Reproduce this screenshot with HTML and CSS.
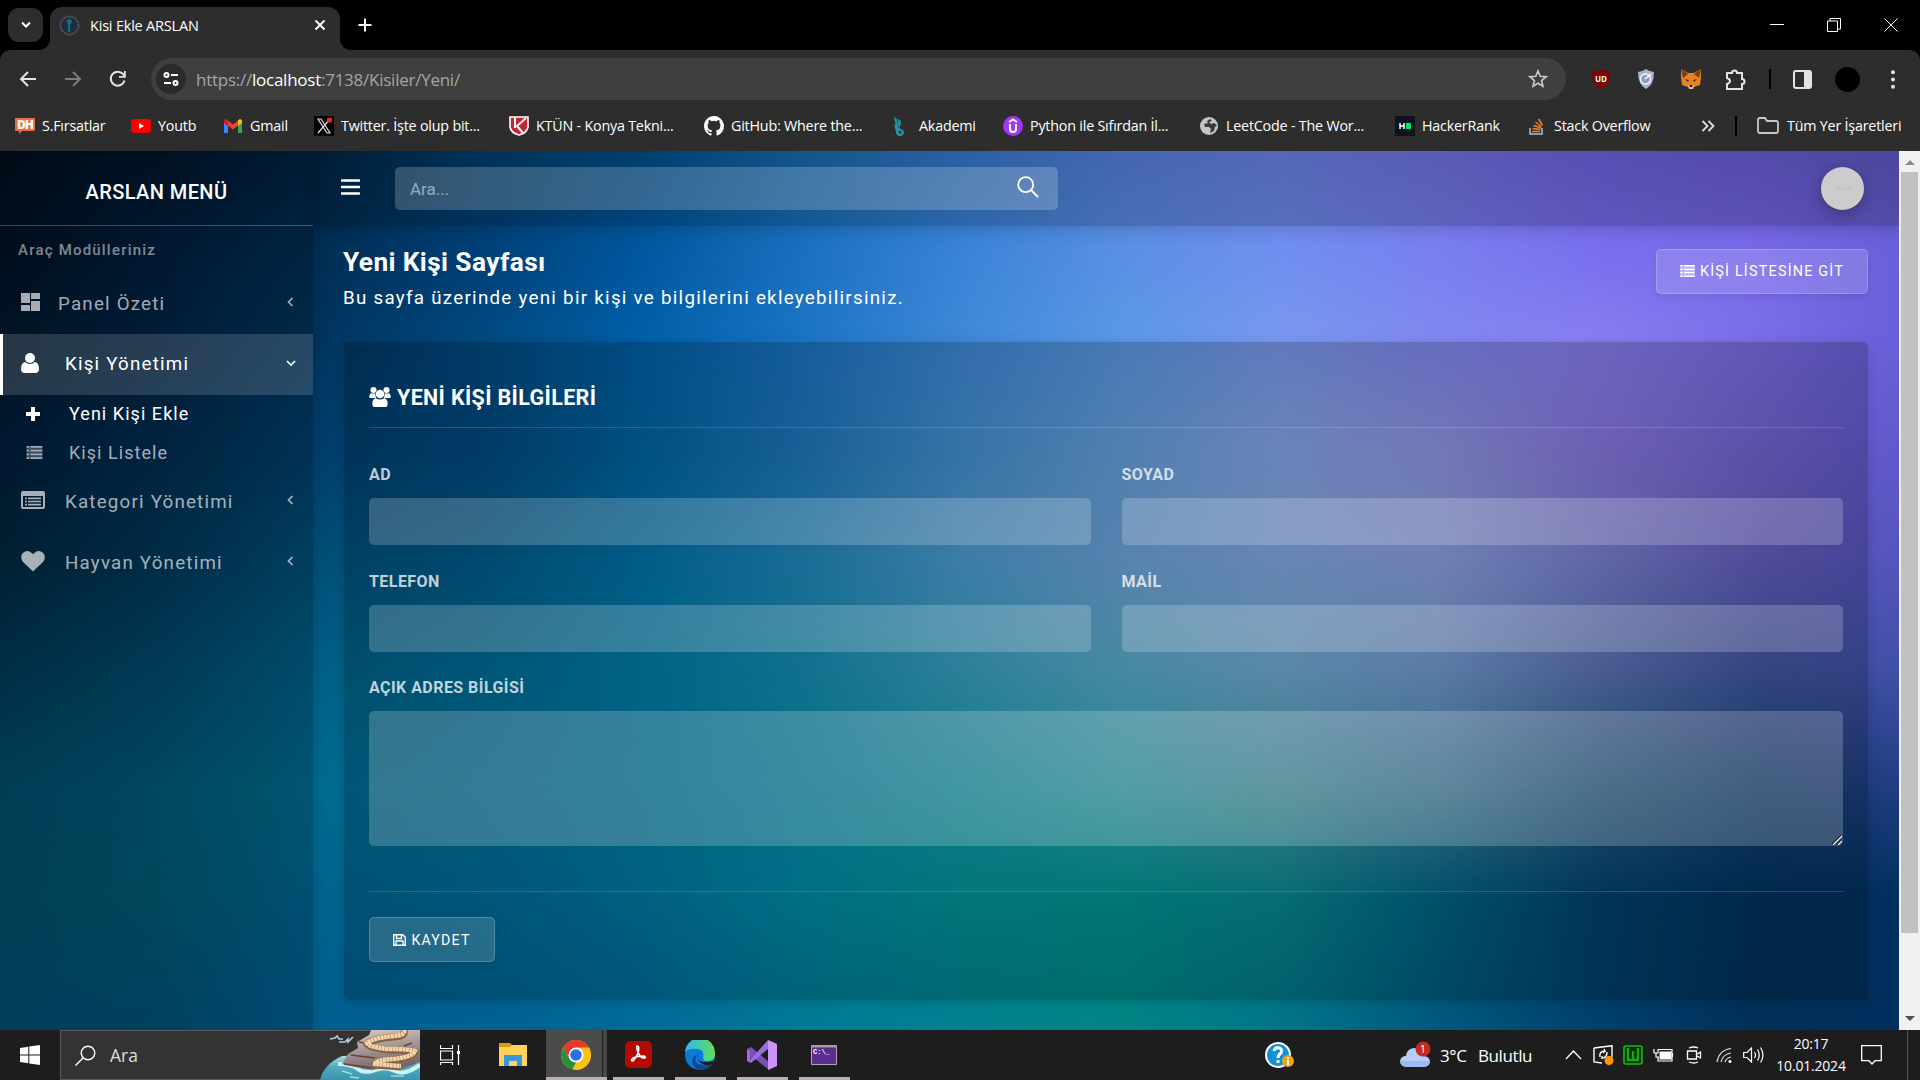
FILE: index.html
```html
<!DOCTYPE html>
<html lang="tr">
<head>
<meta charset="utf-8">
<title>Kisi Ekle ARSLAN</title>
<link rel="stylesheet" href="styles.css">
</head>
<body>
<svg class="defs" width="0" height="0">
  <symbol id="list" viewBox="0 0 17 14"><path d="M0 0h3v2H0zM4 0h13v2H4zM0 4h3v2H0zM4 4h13v2H4zM0 8h3v2H0zM4 8h13v2H4zM0 12h3v2H0zM4 12h13v2H4z" fill="currentColor"/><path d="M0 2h17v2H0zM0 6h17v2H0zM0 10h17v2H0z" fill="currentColor" opacity=".35"/></symbol>
  <symbol id="left" viewBox="0 0 8 12"><path d="M6.5 2 2.5 6l4 4" fill="none" stroke="currentColor" stroke-width="1.7"/></symbol>
</svg>

<header class="tabs">
  <button class="tabsearch"><svg width="12" height="8" viewBox="0 0 12 8"><path d="m2 1.5 4 4 4-4" fill="none" stroke="#fff" stroke-width="2"/></svg></button>
  <div class="tab">
    <svg width="21" height="21" viewBox="0 0 21 21"><circle cx="10.500" cy="10.500" r="9" fill="none" stroke="#50506a" stroke-width="2" stroke-dasharray="2 1"/><circle cx="10.500" cy="10.500" r="7" fill="#19303e"/><path d="M8 5q5-2 5 2l-2 3v7H9v-7z" fill="#1888a8" opacity=".7"/></svg>
    <span class="ui">Kisi Ekle ARSLAN</span>
    <svg class="x" width="12" height="12" viewBox="0 0 12 12"><path d="m1.500 1.500 9 9m0-9-9 9" stroke="#fff" stroke-width="1.800"/></svg>
  </div>
  <svg class="plus" width="14" height="14" viewBox="0 0 14 14"><path d="M7 .5v13M.5 7h13" stroke="#fff" stroke-width="2"/></svg>
  <div class="win">
    <svg width="14" height="14" viewBox="0 0 14 14"><path d="M0 6.500h14" stroke="#fff"/></svg>
    <svg width="14" height="14" viewBox="0 0 14 14"><path d="M.5 3h10v10.500H.5zM3 3V.5h10.500V11h-3" fill="none" stroke="#fff"/></svg>
    <svg width="14" height="14" viewBox="0 0 14 14"><path d="m.5.5 13 13m0-13-13 13" stroke="#fff"/></svg>
  </div>
</header>

<nav class="toolbar">
  <div class="navbtns">
    <svg width="18" height="18" viewBox="0 0 18 18"><path d="M17 9H2.500M9 2 2 9l7 7" fill="none" stroke="#e3e3e3" stroke-width="2"/></svg>
    <svg width="18" height="18" viewBox="0 0 18 18"><path d="M1 9h14.500M9 2l7 7-7 7" fill="none" stroke="#7c7c7c" stroke-width="2"/></svg>
    <svg width="18" height="18" viewBox="0 0 18 18"><path d="M15.500 10.500A7 7 0 1 1 14 4l2 2.500" fill="none" stroke="#e3e3e3" stroke-width="2"/><path d="M16.800 1v6.800H10V6h5V1z" fill="#e3e3e3"/></svg>
  </div>
  <div class="omni">
    <span class="site"><svg width="16" height="14" viewBox="0 0 16 14"><g fill="none" stroke="#fff" stroke-width="2"><circle cx="3.500" cy="3" r="2"/><path d="M8 3h7M1 11h7"/><circle cx="12.500" cy="11" r="2"/></g></svg></span>
    <span class="url">https://<b>localhost</b>:7138/Kisiler/Yeni/</span>
    <svg class="star" width="20" height="20" viewBox="0 0 20 20"><path d="m10 2 2.200 5.300 5.800.5-4.400 3.800 1.300 5.700L10 14.300l-4.900 3 1.300-5.700L2 7.800l5.800-.5z" fill="none" stroke="#c7c7c7" stroke-width="1.700"/></svg>
  </div>
  <div class="ext">
    <svg width="20" height="20" viewBox="0 0 20 20"><path d="M10 0q4 3 9 3 1 13-9 17Q0 16 1 3q5 0 9-3z" fill="#800000"/><text x="10" y="12.500" class="tiny">UD</text></svg>
    <svg width="20" height="20" viewBox="0 0 20 20"><path d="M10 0q4 3 8 3 0 13-8 17Q2 16 2 3q4 0 8-3z" fill="#aab4ca"/><circle cx="9.500" cy="10" r="5" fill="#8f9bb8" stroke="#f4f7fc" stroke-width="1.400"/><path d="m9 10 6-5" stroke="#fff" stroke-width="1.500"/></svg>
    <svg width="22" height="20" viewBox="0 0 22 20"><path d="m1 0 7 4h6l7-4v8l-1 8-6 2-3 2-3-2-6-2-1-8z" fill="#e8821e"/><path d="m1 0 7 5-5 4zM21 0l-7 5 5 4z" fill="#763d16"/><path d="m5 10 4 1-1 2zM17 10l-4 1 1 2z" fill="#233447"/><path d="M8 16h6l-1 4H9z" fill="#d7c1b3"/><path d="M9.500 16h3l-.5 2h-2z" fill="#161616"/></svg>
    <svg width="22" height="23" viewBox="0 0 22 23"><path d="M2 5h5a2.500 2.500 0 0 1 5 0h5v6a2.400 2.400 0 0 1 0 5v5H2v-5q3-1 3-3t-3-3z" fill="none" stroke="#e3e3e3" stroke-width="2"/></svg>
    <i class="bar"></i>
    <svg width="19" height="19" viewBox="0 0 19 19"><rect x="1" y="1" width="17" height="17" rx="2" fill="none" stroke="#e3e3e3" stroke-width="2"/><path d="M11 1h7v17h-7z" fill="#e3e3e3"/></svg>
    <i class="me"></i>
    <svg width="4" height="19" viewBox="0 0 4 19"><g fill="#e3e3e3"><circle cx="2" cy="2.300" r="2"/><circle cx="2" cy="9.500" r="2"/><circle cx="2" cy="16.700" r="2"/></g></svg>
  </div>
</nav>

<nav class="marks ui">
  <a><svg width="20" height="20" viewBox="0 0 20 20"><path d="M0 2h20v12l-1 1H7l-3 3v-3H0z" fill="#ee6a40"/><text x="10" y="12.500" class="dh">DH</text></svg>S.Fırsatlar</a>
  <a><svg width="20" height="20" viewBox="0 0 20 20"><rect y="3" width="20" height="14" rx="4" fill="#f00"/><path d="m8 7 5 3-5 3z" fill="#fff"/></svg>Youtb</a>
  <a><svg width="20" height="20" viewBox="0 0 20 20"><path d="M1 4h4v13H1z" fill="#4285f4"/><path d="M15 4h4v13h-4z" fill="#34a853"/><path d="m3 3 7 5.500L17 3v5l-7 5.500L3 8z" fill="#ea4335"/><path d="M15 4.500 17 3l2 1v3l-4 3z" fill="#fbbc04"/><path d="M1 4 3 3l2 1.500V10L1 7z" fill="#c5221f"/></svg>Gmail</a>
  <a><svg width="20" height="20" viewBox="0 0 20 20"><path d="M0 0h20v20H0z"/><path d="M4 3h3l9 14h-3zM16 3 4 17" fill="none" stroke="#ddd" stroke-width="1.200"/><circle cx="15.500" cy="4" r="2.600" fill="#f22"/></svg>Twitter. İşte olup bit...</a>
  <a><svg width="20" height="20" viewBox="0 0 20 20"><path d="M1 1h18v10q-1 6-9 8-8-2-9-8z" fill="#c82333" stroke="#fff" stroke-width="1.600"/><path d="M6 2v10m11-10-9 8 6 7" fill="none" stroke="#fff" stroke-width="2"/></svg>KTÜN - Konya Tekni...</a>
  <a><svg width="20" height="20" viewBox="0 0 16 16"><path fill="#fff" d="M8 0C3.580 0 0 3.580 0 8c0 3.540 2.290 6.530 5.470 7.590.4.070.55-.17.55-.38v-1.490c-2.010.37-2.530-.49-2.690-.94-.09-.23-.48-.94-.82-1.130-.28-.15-.68-.52-.01-.53.630-.01 1.080.58 1.230.82.720 1.210 1.870.87 2.330.66.070-.52.280-.87.510-1.070-1.780-.2-3.640-.89-3.640-3.950 0-.87.310-1.590.82-2.150-.08-.2-.36-1.020.08-2.120 0 0 .67-.21 2.200.82a7.500 7.500 0 0 1 4 0c1.530-1.040 2.200-.82 2.200-.82.440 1.100.160 1.920.08 2.120.51.560.82 1.270.82 2.150 0 3.070-1.870 3.750-3.650 3.950.29.250.54.730.54 1.480v2.200c0 .21.150.46.550.38A8.010 8.010 0 0 0 8 0z"/></svg>GitHub: Where the...</a>
  <a class="ak"><svg width="20" height="20" viewBox="0 0 20 20"><path d="m4 1 3 2 1 8-2-1zm4 2 3 2-1 6-2-1zM4 8l7 5q3 1 3 4-1 3-4 3-4 0-4-4z" fill="#2793aa"/><circle cx="10" cy="16" r="1.500" fill="#2d2d2d"/></svg>Akademi</a>
  <a><svg width="20" height="20" viewBox="0 0 20 20"><circle cx="10" cy="10" r="10" fill="#a435f0"/><path d="m6 6 4-2.500L14 6M7 8v5q0 3 3 3t3-3V8" fill="none" stroke="#fff" stroke-width="2"/></svg>Python ile Sıfırdan İl...</a>
  <a><svg width="20" height="20" viewBox="0 0 20 20"><circle cx="10" cy="10" r="9" fill="#c4c7c9"/><path d="M11 3 8 5l1 2-4 1 1 3 4 0 2 2-1 4 4-2 1-4 2-2-3-2-3 1-2-2 3-1z" fill="#3a3a3a"/></svg>LeetCode - The Wor...</a>
  <a><svg width="20" height="20" viewBox="0 0 20 20"><path d="M0 0h20v20H0z" fill="#0b141f"/><path d="M5 7v6m4-6v6M5 10h4" stroke="#fff" stroke-width="1.500"/><path d="M11 7h5v6h-5z" fill="#00ea64"/></svg>HackerRank</a>
  <a><svg width="20" height="20" viewBox="0 0 20 20"><path d="M3 12v6h12v-6" fill="none" stroke="#bcbbbb" stroke-width="1.500"/><path d="M5 15.500h8M5.500 12.500l8 1M6.500 9.500l7.500 2.300M8.500 6l6 4.500M11.500 3l4 6" stroke="#f48024" stroke-width="1.500"/></svg>Stack Overflow</a>
  <a class="more"><svg width="14" height="12" viewBox="0 0 14 12"><path d="m1.500 1 5 5-5 5m6-10 5 5-5 5" fill="none" stroke="#ddd" stroke-width="1.800"/></svg></a>
  <a class="all"><svg width="22" height="18" viewBox="0 0 22 18"><path d="M1 3q0-2 2-2h5l2 3h9q2 0 2 2v8q0 2-2 2H3q-2 0-2-2z" fill="none" stroke="#c7c7c7" stroke-width="1.800"/></svg>Tüm Yer İşaretleri</a>
</nav>

<main class="view">
  <div class="page">
    <div class="mesh"><i class="m1"></i><i class="m2"></i><i class="m3"></i><i class="m4"></i><i class="m5"></i><i class="m6"></i><i class="m7"></i><i class="m8"></i><i class="m9"></i></div>
    <aside class="side">
      <h5>ARSLAN MENÜ</h5>
      <p class="cap"><span>Araç Modülleriniz</span></p>
      <a class="row dash"><svg width="19" height="18" viewBox="0 0 19 18"><path d="M0 0h9v10H0zM10 0h9v6h-9zM0 12h9v6H0zM10 8h9v10h-9z" fill="currentColor"/></svg><span>Panel Özeti</span><svg class="ch" width="8" height="12"><use href="#left"/></svg></a>
      <a class="row on"><svg width="18" height="20" viewBox="0 0 18 20"><circle cx="9" cy="5" r="5" fill="currentColor"/><path d="M4 9q5 4 10 0 4 1 4 7 0 4-4 4H4q-4 0-4-4 0-6 4-7z" fill="currentColor"/></svg><span>Kişi Yönetimi</span><svg class="ch" width="12" height="8" viewBox="0 0 12 8"><path d="m2 2 4 4 4-4" fill="none" stroke="currentColor" stroke-width="1.700"/></svg></a>
      <div class="sub">
        <a class="cur"><svg width="14" height="14" viewBox="0 0 14 14"><path d="M5 0h4v5h5v4H9v5H5V9H0V5h5z" fill="currentColor"/></svg><span>Yeni Kişi Ekle</span></a>
        <a><svg width="17" height="13"><use href="#list" width="17" height="13"/></svg><span>Kişi Listele</span></a>
      </div>
      <a class="row"><svg width="24" height="18" viewBox="0 0 24 18"><path d="M2 0h20q2 0 2 2v14q0 2-2 2H2q-2 0-2-2V2q0-2 2-2zm0 5v11h20V5z" fill="currentColor" fill-rule="evenodd"/><path d="M4 7.300h2m1 0h13M4 10.500h2m1 0h13M4 13.700h2m1 0h13" stroke="currentColor" stroke-width="1.700"/></svg><span>Kategori Yönetimi</span><svg class="ch" width="8" height="12"><use href="#left"/></svg></a>
      <a class="row"><svg width="24" height="21" viewBox="0 0 24 21"><path d="M12 20.500 2 11Q-1 7 1 3 5-2 10 1.500L12 3l2-1.500Q19-2 23 3q2 4-1 8z" fill="currentColor"/></svg><span>Hayvan Yönetimi</span><svg class="ch" width="8" height="12"><use href="#left"/></svg></a>
    </aside>
    <section class="main">
      <div class="top">
        <svg width="19" height="16" viewBox="0 0 19 16"><path d="M1 1.500h17M1 8h17M1 14.500h17" stroke="#fff" stroke-width="2.600" stroke-linecap="round"/></svg>
        <div class="search"><span>Ara...</span><svg width="22" height="22" viewBox="0 0 22 22"><circle cx="8.700" cy="8.700" r="7.500" fill="none" stroke="#fff" stroke-width="1.800"/><path d="m14 14 7 7" stroke="#fff" stroke-width="2"/></svg></div>
        <div class="avatar">110 x 110</div>
      </div>
      <div class="head">
        <div><h1>Yeni Kişi Sayfası</h1><p>Bu sayfa üzerinde yeni bir kişi ve bilgilerini ekleyebilirsiniz.</p></div>
        <a class="btn goto"><svg width="15" height="12"><use href="#list" width="15" height="12"/></svg><span>KİŞİ LİSTESİNE GİT</span></a>
      </div>
      <form class="card">
        <h2><svg width="22" height="20" viewBox="0 0 22 20"><g fill="#fff"><circle cx="4.500" cy="3" r="3"/><circle cx="17.500" cy="3" r="3"/><path d="M2 6q3 1 4 0l1 5H1Q-1 9 2 6zM20 6q-3 1-4 0l-1 5h6q2-2-1-5z"/><circle cx="11" cy="7" r="4.300"/><path d="M6.500 11q4.500 3 9 0 4 2 3 7 0 2-2 2h-11q-2 0-2-2-1-5 3-7z"/></g></svg><span>YENİ KİŞİ BİLGİLERİ</span></h2>
        <div class="grid">
          <label><span>AD</span><i class="in"></i></label>
          <label><span>SOYAD</span><i class="in"></i></label>
          <label><span>TELEFON</span><i class="in"></i></label>
          <label><span>MAİL</span><i class="in"></i></label>
          <label class="wide"><span>AÇIK ADRES BİLGİSİ</span><i class="in area"><svg width="10" height="10" viewBox="0 0 10 10"><path d="m0 10 10-10M5 10l5-5" stroke="#222" stroke-width="2.200"/><path d="m1 10 9-9M6 10l4-4" stroke="#fff" stroke-width="1.100"/></svg></i></label>
        </div>
        <div class="foot"><a class="btn save"><svg width="13" height="12" viewBox="0 0 13 12"><path d="M.7.7h9l2.600 2.500v8.100H.7zM3.500 1v3.500h5V1M3 11V7h7v4" fill="none" stroke="#fff" stroke-width="1.400"/></svg><span>KAYDET</span></a></div>
      </form>
    </section>
  </div>
  <div class="scroll"><i class="up"></i><i class="thumb"></i><i class="down"></i></div>
</main>

<footer class="task">
  <div class="start"><svg width="20" height="20" viewBox="0 0 20 20"><path d="m0 3 8.300-1.200v7.700H0zM9.300 1.600 20 0v9.500H9.300zM0 10.500h8.300v7.700L0 17zM9.300 10.500H20V20L9.300 18.400z" fill="#fff"/></svg></div>
  <div class="find"><svg width="21" height="21" viewBox="0 0 21 21"><circle cx="13" cy="8" r="6.800" fill="none" stroke="#fff" stroke-width="1.400"/><path d="m8 13-7.500 7.500" stroke="#fff" stroke-width="1.500"/></svg><span>Ara</span>
    <svg class="isle" width="100" height="50" viewBox="0 0 100 50"><defs><linearGradient id="sea" x1="0" y1="0" x2="0" y2="1"><stop offset="0" stop-color="#bfe9ec"/><stop offset=".5" stop-color="#52acc0"/><stop offset="1" stop-color="#3a94ae"/></linearGradient><linearGradient id="rock" x1="0" y1="0" x2=".3" y2="1"><stop offset="0" stop-color="#dccdc9"/><stop offset="1" stop-color="#77676c"/></linearGradient></defs><path d="M0 50q4-16 22-24l78-3v27z" fill="url(#sea)"/><path d="M18 34q14 0 20 5t17 1 20 1 25-6" fill="none" stroke="#c8f6f5" stroke-width="4"/><path d="m51 0-2 5-12 7 1 6-10 6-6 10 13 3 17 3 12-2 18 1 18-7V0z" fill="url(#rock)"/><path d="m39 12 10 2m-18 11 24 3m-31 6 28 4m40-25-8 3m9 5-18 9" stroke="#6b4034" stroke-width="1.500"/><path d="M84 0q2 7-10 7-22 2-27 7 2 4 20 6 24 0 28 2-2 6-22 8-18 1-18 5l26 2" fill="none" stroke="#876144" stroke-width="7"/><path d="M84 0q2 5-10 6-22 2-27 7 2 4 20 6 24 0 28 2-2 6-22 8-18 1-18 5l26 2" fill="none" stroke="#f5d7ad" stroke-width="4.500" stroke-dasharray="3 .4"/><path d="m10 9 5-1 2-2 2 3 4 0M19 12l6 0 3-3 0 3 5-5" fill="none" stroke="#b8cbe0" stroke-width="1.600"/><path d="m22 41 10 3m-2 3 9 1m32-2 13 0" stroke="#8be0e2" stroke-width="1.600"/></svg>
  </div>
  <div class="apps">
    <span class="tv"><svg width="20" height="20" viewBox="0 0 20 20"><path d="M.5 0v3.500h12V0M.5 6h12v9H.5zM.5 20v-2.500h12V20M18.500 0v6m0 3v11" fill="none" stroke="#fff" stroke-width="1.200"/><path d="M17 6h3v3h-3z" fill="#fff"/></svg></span>
    <span><svg width="28" height="24" viewBox="0 0 28 24"><path d="M0 0h11l2 2v6H0z" fill="#dd9b0b"/><path d="M0 4h11l2-2h15v21H0z" fill="#ffd35a"/><path d="M5 23V12h18v11h-5v-5h-8v5z" fill="#3a96dd"/></svg></span>
    <span class="act"><svg width="30" height="30" viewBox="0 0 30 30"><circle cx="15" cy="15" r="15" fill="#fbc116"/><path d="M2 7.500A15 15 0 0 1 28 7.500H15L8.500 19z" fill="#e33b2e"/><path d="M2 7.500 8.500 19l6.500 3.500L11.200 29.500A15 15 0 0 1 2 7.500z" fill="#229342"/><path d="m15 30 6.500-11L22 8h6.200A15 15 0 0 1 15 30z" fill="#fbc116"/><circle cx="15" cy="15" r="7.500" fill="#fff"/><circle cx="15" cy="15" r="5.800" fill="#2c6fe8"/></svg></span>
    <span class="run"><svg width="27" height="27" viewBox="0 0 27 27"><rect width="27" height="27" rx="5" fill="#b30b00"/><path d="M12 5q3 0 1 7-2 5-5 8-3 0 0-3 4-2 11-2 3 2 0 2-4 0-6-6-2-5-1-6z" fill="none" stroke="#fff" stroke-width="1.600"/></svg></span>
    <span class="run"><svg width="30" height="30" viewBox="0 0 30 30"><defs><linearGradient id="e1"><stop stop-color="#30b6f0"/><stop offset="1" stop-color="#5fdf55"/></linearGradient></defs><circle cx="15" cy="15" r="15" fill="#0b7bd5"/><path d="M0 12A15 15 0 0 1 30 14q0 7-7 7-5 0-5-3 2-8-5-9Q4 8 0 12z" fill="url(#e1)"/><path d="M12 15q-6 10 9 10 4 0 7-2-5 8-15 7Q4 24 9 16z" fill="#0c4a95"/><path d="M13 13q-3 10 10 9l7-1v2q-3 2-9 2-10-2-8-12z" fill="#1c1c1c"/></svg></span>
    <span class="run"><svg width="30" height="30" viewBox="0 0 30 30"><path d="m0 9 4-2 18 15v8L6 17l-3 2.500-3-1z" fill="#7a4fb8"/><path d="M0 21V9l3 3v8l18-20v9L4 23z" fill="#9b6ddb"/><path d="m21 0 9 4v22l-9 4z" fill="#cc94fb"/></svg></span>
    <span class="run"><svg width="26" height="20" viewBox="0 0 26 20"><path d="M.5.500h25v19H.5z" fill="#582c90" stroke="#aaa"/><path d="M1 1.500h24" stroke="#999" stroke-width="2"/><text x="2" y="9" class="cmd">C:\_</text></svg></span>
  </div>
  <div class="tray">
    <svg class="i-help" width="30" height="28" viewBox="0 0 30 28"><circle cx="13" cy="14" r="12" fill="#1690d4" stroke="#fff" stroke-width="2"/><path d="M9 10q1-4 5-3 4 1 2 5-3 2-3 5m0 2v3" fill="none" stroke="#fff" stroke-width="3"/><circle cx="23" cy="20" r="6" fill="#e9a61c"/><path d="M23 16v2m0 1v5" stroke="#fff" stroke-width="1.600"/></svg>
    <svg class="i-cloud" width="32" height="28" viewBox="0 0 32 28"><path d="M6 26q-6-1-6-6 1-5 6-5 1-8 9-8 7 0 8 8 7 0 7 6-1 5-7 5z" fill="#b6cdf6"/><path d="M6 26q-6-1-6-6h30q0 6-7 6z" fill="#8facea" opacity=".6"/><circle cx="23" cy="8" r="7.500" fill="#c42b1c"/><text x="23" y="12" class="one">1</text></svg>
    <span class="i-temp">3°C</span><span class="i-sky">Bulutlu</span>
    <svg class="i-up" width="17" height="10" viewBox="0 0 17 10"><path d="m1 9 7.500-8L16 9" fill="none" stroke="#fff" stroke-width="1.300"/></svg>
    <svg class="i-sync" width="21" height="20" viewBox="0 0 21 20"><path d="M1 3 19 .700V12M1 3v14l8 1M7 12q-1-6 5-6l-1-2m1 2-2 2m4-1q0 6-5 6m0-2v3" fill="none" stroke="#fff" stroke-width="1.400"/><circle cx="16" cy="15.500" r="4.500" fill="#ff9800"/></svg>
    <svg class="i-w" width="20" height="20" viewBox="0 0 20 20"><rect x="1" y="1" width="18" height="18" rx="2" fill="#012d01" stroke="#10c010" stroke-width="1.600"/><path d="M5 3v12h10V3M10 6v9" fill="none" stroke="#16a816" stroke-width="2.500"/></svg>
    <svg class="i-bat" width="21" height="14" viewBox="0 0 21 14"><path d="M6.500 3.500h12v8h-12z" fill="#fff"/><path d="M5 1.500h14v11.500H5V9M19.500 5v4M1 1v4h4V1M3 5v4h3" fill="none" stroke="#fff" stroke-width="1.200"/></svg>
    <svg class="i-cam" width="16" height="18" viewBox="0 0 16 18"><path d="M1.500 5h9v8h-9zM11 8l3.500-2v6L11 10M3 2q5-2 9 0M3 16q5 2 9 0" fill="none" stroke="#fff" stroke-width="1.300"/></svg>
    <svg class="i-wifi" width="17" height="17" viewBox="0 0 17 17"><path d="M1 15Q3 3 15 1.500M5 15q2-8 10-9M9 15q1-4 6-5" fill="none" stroke="#ddd" stroke-width="1.200"/><circle cx="14" cy="14.500" r="1.500" fill="#fff"/></svg>
    <svg class="i-snd" width="21" height="16" viewBox="0 0 21 16"><path d="M.7 5.500H4L8.500 1v14L4 10.500H.7zM11.500 5q2 3 0 6m3-8.500q3.500 5.500 0 11M17.500.5q5 7.500 0 15" fill="none" stroke="#fff" stroke-width="1.200"/></svg>
    <div class="clock"><span>20:17</span><span>10.01.2024</span></div>
    <svg class="i-note" width="21" height="20" viewBox="0 0 21 20"><path d="M.7.700h19.600v15H14l-3 3.300-3-3.300H.7z" fill="none" stroke="#fff" stroke-width="1.300"/></svg>
    <i class="peek"></i>
  </div>
</footer>
</body>
</html>
```
FILE: styles.css
```css
* { box-sizing: border-box; }
html, body { margin: 0; height: 100%; overflow: hidden; }
body { width: 1920px; height: 1080px; background: #000; color: #fff; font-family: Roboto, sans-serif; display: flex; flex-direction: column; }
svg { flex: none; display: block; }
i { font-style: normal; }
span { white-space: nowrap; }
.defs { position: absolute; }
.ui, .url, .find, .tray { font-family: "Open Sans", "Noto Sans", sans-serif; }
.tiny { font: bold 8px "Open Sans", sans-serif; fill: #fff; text-anchor: middle; }
.dh { font: 800 12px "Open Sans", sans-serif; fill: #fff; text-anchor: middle; letter-spacing: -1px; }
.cmd { font: bold 7px "Liberation Mono", monospace; fill: #fff; }
.one { font: 11px "Open Sans", sans-serif; fill: #fff; text-anchor: middle; }

/* window frame */
.tabs { height: 50px; flex: none; display: flex; align-items: center; padding-left: 8px; }
.tabsearch { width: 35px; height: 34px; border: 0; border-radius: 11px; background: #2d2d2d; display: grid; place-items: center; padding: 0; }
.tab { margin-left: 7px; width: 290px; height: 43px; align-self: flex-end; border-radius: 12px 12px 0 0; background: #2d2d2d; display: flex; align-items: center; padding: 0 14px 7px 9px; position: relative; font-size: 14.500px; letter-spacing: -.2px; }
.tab::before, .tab::after { content: ""; position: absolute; bottom: 0; width: 12px; height: 12px; }
.tab::before { left: -12px; background: radial-gradient(circle at 0 0, transparent 12px, #2d2d2d 12.5px); }
.tab::after { right: -12px; background: radial-gradient(circle at 100% 0, transparent 12px, #2d2d2d 12.5px); }
.tab span { margin-left: 10px; }
.tab .x { margin-left: auto; }
.plus { margin-left: 18px; }
.win { margin-left: auto; display: flex; gap: 43px; padding-right: 22px; }

.toolbar { height: 57px; flex: none; background: #2d2d2d; border-radius: 10px 10px 0 0; display: flex; padding: 8px 0 0 19px; }
.navbtns { display: flex; gap: 27px; width: 132px; height: 42px; align-items: center; }
.omni { width: 1415px; height: 42px; border-radius: 21px; background: #3f3f3f; display: flex; align-items: center; padding: 0 18px 0 5px; }
.site { width: 30px; height: 30px; border-radius: 50%; background: #2a2a2a; display: grid; place-items: center; }
.url { margin-left: 10px; font-size: 17px; color: #a5a5a5; letter-spacing: -.25px; }
.url b { color: #fff; font-weight: 400; }
.star { margin-left: auto; }
.ext { display: grid; grid-template-columns: 45px 45px 45px 46px 21px 45px 45px 45px; margin-left: 12px; height: 42px; align-items: center; justify-items: center; }
.bar { width: 2px; height: 20px; background: #000; }
.me { width: 25px; height: 25px; border-radius: 50%; background: #000; }
.marks { height: 44px; flex: none; background: #2d2d2d; border-top: 1px solid #292929; display: grid; grid-template-columns: 116px 92px 91px 195px 195px 186px 113px 196px 196px 132px 174px 56px 148px; padding: 0 0 8px 15px; align-items: center; font-size: 14.300px; letter-spacing: -.2px; }
.marks a { display: flex; align-items: center; gap: 7px; white-space: nowrap; }
.marks .ak { gap: 9px; }
.marks .more { border-right: 2px solid #000; height: 20px; width: 36px; }
.marks .all { gap: 8px; }

/* page */
.view { height: 879px; flex: none; display: flex; }
.page { width: 1899px; position: relative; display: flex; overflow: hidden; }
.mesh, .mesh i { position: absolute; inset: 0; }
.mesh i { -webkit-mask-image: linear-gradient(transparent var(--s), #000 var(--e)); mask-image: linear-gradient(transparent var(--s), #000 var(--e)); }
.m1 { background: linear-gradient(90deg, #000f1e, #00162b 8.4%, #002444 16.800%, #00406f 25.300%, #00508c 33.700%, #186bb0 42.100%, #347acb 50.600%, #5681dc 59%, #6a82e6 67.400%, #7073e4 75.800%, #6e63e0 84.300%, #695ed6 92.700%, #605ac4); mask-image: none !important; -webkit-mask-image: none !important; }
.m2 { --s: 0%; --e: 12.400%; background: linear-gradient(90deg, #001224, #002040 8.4%, #002f54 16.800%, #004078 25.300%, #0058a0 33.700%, #1a70c0 42.100%, #3a84d8 50.600%, #5a90e4 59%, #7090f0 67.400%, #7a80f0 75.800%, #7a70ee 84.300%, #786aea 92.700%, #6a60da); }
.m3 { --s: 12.400%; --e: 21.500%; background: linear-gradient(90deg, #001a30, #002445 8.4%, #003560 16.800%, #004a80 25.300%, #0060a8 33.700%, #1a74c4 42.100%, #3f88d8 50.600%, #5a98e6 59%, #7a98ee 67.400%, #8088f0 75.800%, #887ef0 84.300%, #7a6ee8 92.700%, #6860d8); }
.m4 { --s: 21.500%; --e: 34%; background: linear-gradient(90deg, #001e3c, #002d50 8.4%, #003f6c 16.800%, #004a80 25.300%, #0064a0 33.700%, #1e78ba 42.100%, #4490d0 50.600%, #64a0dc 59%, #86a6e6 67.400%, #9096e4 75.800%, #8878e0 84.300%, #7266d2 92.700%, #6058cc); }
.m5 { --s: 34%; --e: 46.500%; background: linear-gradient(90deg, #00283f, #003759 8.4%, #005078 16.800%, #005c8c 25.300%, #0074a8 33.700%, #2088bc 42.100%, #4c9cd0 50.600%, #6ca4da 59%, #82a8e2 67.400%, #8ca0e0 75.800%, #7880d0 84.300%, #645fc0 92.700%, #5454bc); }
.m6 { --s: 46.500%; --e: 59%; background: linear-gradient(90deg, #003a58, #004a6c 8.4%, #006088 16.800%, #006c94 25.300%, #007ca8 33.700%, #148eb0 42.100%, #38a0c0 50.600%, #58acca 59%, #70aad2 67.400%, #729ad0 75.800%, #5c74b4 84.300%, #4058a0 92.700%, #4050a8); }
.m7 { --s: 59%; --e: 72.700%; background: linear-gradient(90deg, #004e6c, #005a78 8.4%, #006c90 16.800%, #00729c 25.300%, #007ca6 33.700%, #0a8cac 42.100%, #189cb0 50.600%, #30a8b4 59%, #489cac 67.400%, #4484a4 75.800%, #285e88 84.300%, #184478 92.700%, #203c80); }
.m8 { --s: 72.700%; --e: 85.200%; background: linear-gradient(90deg, #00506a, #005a74 8.4%, #006490 16.800%, #006c98 25.300%, #0078a0 33.700%, #008aa4 42.100%, #009498 50.600%, #009494 59%, #088890 67.400%, #006484 75.800%, #00426c 84.300%, #00325e 92.700%, #00305e); }
.m9 { --s: 85.200%; --e: 100%; background: linear-gradient(90deg, #005074, #005078 8.4%, #005f90 16.800%, #006090 25.300%, #006a98 33.700%, #007894 42.100%, #008090 50.600%, #008484 59%, #007488 67.400%, #00587c 75.800%, #00406c 84.300%, #003058 92.700%, #00305e); }

.side { position: relative; width: 313px; background: rgba(0,0,0,.2); box-shadow: 0 3px 15px rgba(0,0,0,.15); color: rgba(255,255,255,.65); }
.side h5 { margin: 0; height: 75px; padding-top: 8px; border-bottom: 1px solid rgba(255,255,255,.25); color: #fff; font-size: 20px; font-weight: 500; line-height: 66px; text-align: center; letter-spacing: .4px; }
.cap { margin: 0; height: 47px; padding: 14px 0 0 18px; font-size: 15px; line-height: 21px; font-weight: 500; letter-spacing: 1.2px; color: rgba(255,255,255,.5); }
.row { height: 61px; display: flex; align-items: center; padding: 0 19px 0 21px; font-size: 18.75px; letter-spacing: 1.200px; position: relative; }
.row > svg { margin-top: -3px; }
.row > svg:first-child { width: 24px; }
.row.dash > svg:first-child { width: 19px; }
.row > span { margin-left: 20px; }
.row.dash > span { margin-left: 18px; }
.row .ch { margin-left: auto; }
.row.on { color: #fff; background: rgba(255,255,255,.15); border-left: 3px solid #fff; padding: 0 16px 2px 18px; }
.row.on > svg { margin-top: -1px; }
.row.on > svg:first-child { width: 18px; }
.row.on > span { margin-left: 26px; }
.sub { height: 76px; }
.sub a { height: 39px; display: flex; align-items: center; padding: 0 0 2px 26px; font-size: 18px; letter-spacing: 1.050px; }
.sub svg { width: 17px; }
.sub .cur svg { width: 14px; margin-right: 3px; }
.sub span { margin-left: 26px; }
.sub .cur { color: #fff; }

.main { position: relative; flex: 1; }
.top { height: 75px; background: rgba(0,0,0,.2); box-shadow: 0 3px 15px rgba(0,0,0,.15); display: flex; align-items: center; padding: 0 35px 0 28px; }
.top > svg { margin-top: -4px; }
.search { margin-left: 35px; width: 663px; height: 43px; border-radius: 5px; background: rgba(255,255,255,.2); display: flex; align-items: center; justify-content: space-between; padding: 0 19px 3px 15px; font-size: 17px; }
.search span { color: rgba(255,255,255,.5); padding-top: 4px; }
.avatar { margin-left: auto; width: 43px; height: 43px; border-radius: 50%; background: #ccc; box-shadow: 0 4px 15px rgba(0,0,0,.3); font-size: 4px; color: #aaa; display: grid; place-items: center; }
.head { display: flex; justify-content: space-between; padding: 20px 31px 0 30px; height: 116px; }
h1 { margin: 0; font-size: 26.250px; line-height: 32px; font-weight: 700; letter-spacing: .4px; white-space: nowrap; }
.head p { margin: 2px 0 0; font-size: 18.75px; line-height: 36px; letter-spacing: 1.270px; white-space: nowrap; }
.btn { border: 1px solid rgba(255,255,255,.2); background: rgba(255,255,255,.15); border-radius: 5px; height: 45px; display: inline-flex; align-items: center; justify-content: center; gap: 5px; font-size: 14.400px; letter-spacing: 1.2px; box-shadow: 0 3px 6px rgba(0,0,0,.08); }
.goto { margin-top: 3px; width: 212px; padding-bottom: 1px; }
.card { margin: 0 31px 0 31px; height: 658px; border-radius: 5px; background: rgba(0,0,0,.2); box-shadow: 0 3px 15px rgba(0,0,0,.15); padding: 25px 25px 0; }
h2 { margin: 0; height: 61px; display: flex; align-items: center; gap: 6px; font-size: 21.500px; font-weight: 700; letter-spacing: .35px; border-bottom: 1px solid rgba(255,255,255,.15); }
h2 span { padding-top: 1px; }
.grid { display: grid; grid-template-columns: 1fr 1fr; gap: 0 31px; padding-top: 36px; }
.grid label { height: 106.500px; font-size: 16px; font-weight: 700; letter-spacing: .45px; color: rgba(255,255,255,.75); }
.grid label > span { display: block; line-height: 21px; height: 34px; }
.in { display: block; height: 47px; border-radius: 5px; background: rgba(255,255,255,.2); }
.grid .wide { grid-column: 1 / 3; height: 180px; }
.in.area { height: 135px; display: flex; align-items: flex-end; justify-content: flex-end; padding: 1px; }
.foot { border-top: 1px solid rgba(255,255,255,.15); margin-top: 34px; padding-top: 25px; }
.save { width: 126px; font-size: 14.200px; }

.scroll { width: 21px; background: #f1f1f1; display: flex; flex-direction: column; align-items: center; }
.up { border: 5px solid transparent; border-bottom-color: #8b8b8b; border-top: 0; margin: 9px 0 7px; }
.thumb { width: 17px; height: 761px; background: #c1c1c1; }
.down { border: 5px solid transparent; border-top-color: #505050; border-bottom: 0; margin-top: auto; margin-bottom: 9px; }

/* taskbar */
.task { height: 50px; flex: none; background: #1d1d1d; display: flex; }
.start { width: 60px; display: grid; place-items: center; }
.find { width: 360px; background: #333; border: 1px solid #5a5a5a; border-right: 0; display: flex; align-items: center; padding-left: 14px; position: relative; font-size: 17.500px; color: #ddd; }
.find > span { margin-left: 14px; }
.isle { position: absolute; right: 0; top: -1px; }
.apps { display: flex; height: 50px; }
.apps span { width: 51px; margin-right: 11px; display: grid; place-items: center; }
.apps .tv { width: 60px; margin: 0; }
.apps .tv + span { width: 66px; margin: 0; }
.apps .act { width: 61px; margin-right: 6px; background: linear-gradient(90deg, transparent 56px, #222 56px, #222 57px, #464646 57px), #4b4b4b; padding-right: 1px; border-bottom: 3px solid #b7b0b0; padding-top: 2px; }
.apps .run { border-bottom: 3px solid #b7b0b0; padding: 2px 1px 0 0; }
.tray { margin-left: auto; width: 660px; display: grid; align-items: center; grid-template-columns: 135px 40px 38px 87px 28px 30px 30px 33px 30px 27px 18px 100px 46px 1px; padding-left: 5px; position: relative; }
.i-temp, .i-sky { font-size: 17px; letter-spacing: -.4px; }
.clock { display: flex; flex-direction: column; align-items: center; font-size: 14px; line-height: 22px; letter-spacing: -.2px; }
.peek { width: 1px; height: 50px; background: #555; }
```
